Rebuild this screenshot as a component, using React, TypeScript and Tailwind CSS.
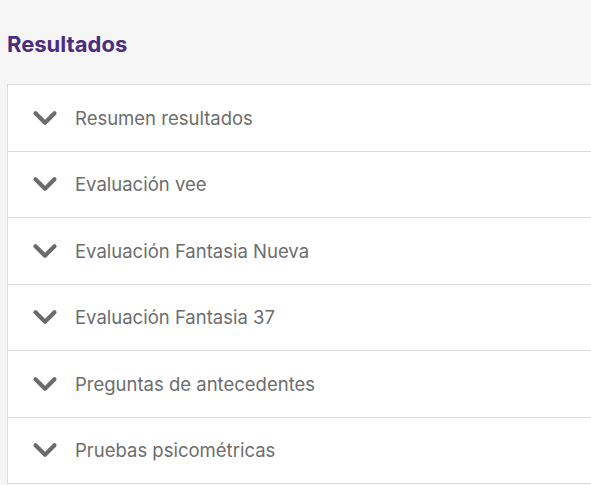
import { ChevronDown } from "lucide-react";

const sections = [
  "Resumen resultados",
  "Evaluación vee",
  "Evaluación Fantasia Nueva",
  "Evaluación Fantasia 37",
  "Preguntas de antecedentes",
  "Pruebas psicométricas",
];

export default function App() {
  return (
    <div
      className="min-h-[485px] bg-[#f6f6f6] pl-[7px] pt-[30px]"
      style={{ fontFamily: 'Inter, "Noto Sans", sans-serif' }}
    >
      <h2 className="text-[22px] font-bold leading-[28px] text-[#4b2d80]">Resultados</h2>

      <div className="mt-[26px] -mr-[20px] border-x border-t border-[#dcdcdc] bg-white">
        {sections.map((title) => (
          <div key={title} className="flex h-[66.5px] items-center border-b border-[#dcdcdc]">
            <ChevronDown size={38} strokeWidth={2.6} className="ml-[18px] text-[#6b6b6b]" />
            <span className="ml-[11px] pt-[2px] text-[18.5px] text-[#6d6d6d]">{title}</span>
          </div>
        ))}
      </div>
    </div>
  );
}
